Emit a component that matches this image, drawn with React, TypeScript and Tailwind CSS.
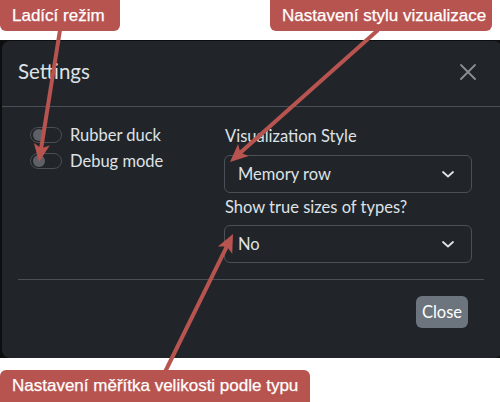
import type { ReactNode } from 'react'

const RED = '#b85450'

function Arrow({ x1, y1, x2, y2 }: { x1: number; y1: number; x2: number; y2: number }) {
  const dx = x2 - x1
  const dy = y2 - y1
  const len = Math.hypot(dx, dy)
  const ux = dx / len
  const uy = dy / len
  const headLen = 18
  const half = 8
  const bx = x2 - ux * headLen
  const by = y2 - uy * headLen
  const pts = [
    `${x2},${y2}`,
    `${bx - uy * half},${by + ux * half}`,
    `${bx + ux * 4},${by + uy * 4}`,
    `${bx + uy * half},${by - ux * half}`,
  ].join(' ')
  return (
    <g>
      <line x1={x1} y1={y1} x2={bx + ux * 5} y2={by + uy * 5} stroke={RED} strokeWidth={4} />
      <polygon points={pts} fill={RED} />
    </g>
  )
}

function Callout({ className, children }: { className: string; children: ReactNode }) {
  return (
    <div
      className={`absolute flex items-center whitespace-nowrap rounded-md bg-[#b85450] px-[12px] text-[17px] text-white ${className}`}
      style={{ fontFamily: '"Liberation Sans", Arial, sans-serif', WebkitTextStroke: '0.25px white' }}
    >
      {children}
    </div>
  )
}

function Switch() {
  return (
    <span className="flex h-[16px] w-[32px] items-center rounded-full border border-[#4b4f54] bg-[#212529] px-[2px]">
      <span className="h-[12px] w-[12px] rounded-full bg-[#5d6167]" />
    </span>
  )
}

function Select({ value }: { value: string }) {
  return (
    <div className="flex h-[38px] items-center justify-between rounded-md border border-[#495057] pl-[13px] pr-[15px]">
      <span>{value}</span>
      <svg width="16" height="16" viewBox="0 0 16 16" fill="none" stroke="#dee2e6" strokeWidth="1.8" strokeLinecap="round" strokeLinejoin="round">
        <path d="M3 6l5 4.5 5-4.5" />
      </svg>
    </div>
  )
}

export default function App() {
  return (
    <div
      className="relative h-[402px] w-[500px] overflow-hidden bg-white text-[16.5px] text-[#dee2e6]"
      style={{ fontFamily: 'Lato, "Segoe UI", sans-serif' }}
    >
      <div className="mt-[40px] h-[318px] bg-[#0d0e0f] pl-[2px] pt-px">
        <div className="flex h-[317px] w-[500px] flex-col rounded-lg bg-[#212529]">
          {/* header */}
          <div className="flex h-[66px] items-center justify-between border-b border-[#495057] pb-[4px] pl-[16px] pr-[26px]">
            <h5 className="text-[20.5px] leading-none">Settings</h5>
            <svg width="16" height="16" viewBox="0 0 16 16" stroke="#8a8e93" strokeWidth="1.8" strokeLinecap="round">
              <path d="M1 1l14 14M15 1L1 15" />
            </svg>
          </div>

          {/* body */}
          <div className="flex h-[172px] pl-[28px] pt-[15px]">
            <div className="flex w-[194px] flex-col">
              <label className="flex h-[26px] items-center gap-[8px]">
                <Switch />
                <span>Rubber duck</span>
              </label>
              <label className="flex h-[26px] items-center gap-[8px]">
                <Switch />
                <span>Debug mode</span>
              </label>
            </div>
            <div className="flex w-[248px] flex-col pt-[2px]">
              <span className="pl-px leading-[24px]">Visualization Style</span>
              <div className="mt-[7px]">
                <Select value="Memory row" />
              </div>
              <span className="mt-[2px] pl-px leading-[24px]">Show true sizes of types?</span>
              <div className="mt-[6px]">
                <Select value="No" />
              </div>
            </div>
          </div>

          {/* footer */}
          <div className="ml-[16px] w-[466px] border-t border-[#495057] pt-[16px]">
            <button className="ml-[398px] flex h-[32px] w-[52px] items-center justify-center rounded-md bg-[#6c757d] text-white">
              Close
            </button>
          </div>
        </div>
      </div>

      {/* annotations */}
      <svg className="pointer-events-none absolute inset-0" width="500" height="402">
        <Arrow x1={60} y1={30} x2={39} y2={162} />
        <Arrow x1={378} y1={30} x2={230} y2={162} />
        <Arrow x1={165} y1={372} x2={233} y2={234} />
      </svg>
      <Callout className="left-0 top-0 h-[31px] w-[120px] rounded-t-none">Ladící režim</Callout>
      <Callout className="left-[270px] top-0 h-[31px] w-[222px] rounded-t-none">Nastavení stylu vizualizace</Callout>
      <Callout className="left-0 top-[370px] h-[32px] w-[310px] rounded-b-none">Nastavení měřítka velikosti podle typu</Callout>
    </div>
  )
}
